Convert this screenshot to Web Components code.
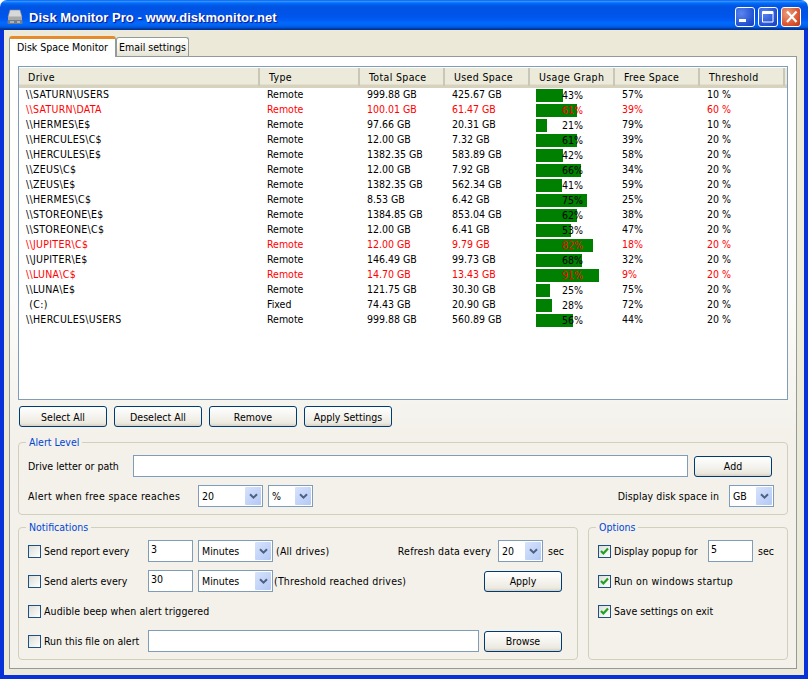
<!DOCTYPE html>
<html>
<head>
<meta charset="utf-8">
<title>Disk Monitor Pro</title>
<style>
    html, body { margin: 0; padding: 0; background: #fff; overflow: hidden; }
    body { font: 10.5px "DejaVu Sans Condensed", "Liberation Sans", sans-serif; color: #000; }
</style>
</head>
<body>
<disk-window></disk-window>

<script>
// Small XP style controls first, then the panels that use them
class XpButton extends HTMLElement {
    constructor() {
        super();
        this.attachShadow({ mode: 'open' }).innerHTML = `
            <style>
                :host {
                    display: flex;
                    align-items: center;
                    justify-content: center;
                    box-sizing: border-box;
                    width: 88px;
                    height: 21px;
                    border: 1px solid #003c74;
                    border-radius: 3px;
                    background: linear-gradient(#fff, #f4f3ee 50%, #ece9df 85%, #d6d0c5);
                }
            </style>
            <slot></slot>
        `;
    }
}

class XpInput extends HTMLElement {
    constructor() {
        super();
        this.attachShadow({ mode: 'open' }).innerHTML = `
            <style>
                :host {
                    display: block;
                    box-sizing: border-box;
                    height: 22px;
                    border: 1px solid #7f9db9;
                    background: #fff;
                    padding: 2px 0 0 2px;
                    line-height: 13px;
                }
            </style>
            <slot></slot>
        `;
    }
}

class XpSelect extends HTMLElement {
    constructor() {
        super();
        this.attachShadow({ mode: 'open' }).innerHTML = `
            <style>
                :host {
                    display: flex;
                    box-sizing: border-box;
                    width: 45px;
                    height: 22px;
                    border: 1px solid #7f9db9;
                    background: #fff;
                    padding: 1px;
                }
                .value { flex: 1; padding-left: 2px; line-height: 18px; }
                .arrow {
                    width: 16px;
                    border-radius: 1px;
                    background: linear-gradient(135deg, #d7e3fc, #b3c8f5);
                    display: flex;
                    align-items: center;
                    justify-content: center;
                }
            </style>
            <span class="value"><slot></slot></span>
            <span class="arrow">
                <svg width="9" height="7" viewBox="0 0 9 7"><path d="M1 1.2 4.5 4.7 8 1.2" fill="none" stroke="#4d6185" stroke-width="2"/></svg>
            </span>
        `;
    }
}

class XpCheck extends HTMLElement {
    constructor() {
        super();
        this.attachShadow({ mode: 'open' }).innerHTML = `
            <style>
                :host {
                    display: inline-flex;
                    align-items: center;
                    gap: 3px;
                    white-space: nowrap;
                }
                .box {
                    box-sizing: border-box;
                    width: 13px;
                    height: 13px;
                    border: 1px solid #1c5180;
                    background: linear-gradient(135deg, #dcdcd7, #fff);
                    display: flex;
                }
                svg { display: none; }
                :host([checked]) svg { display: block; }
            </style>
            <span class="box"><svg width="11" height="11" viewBox="0 0 11 11"><path d="M2 5 4.4 7.5 9 2.5" fill="none" stroke="#21a121" stroke-width="2.2"/></svg></span>
            <slot></slot>
        `;
    }
}

class XpGroup extends HTMLElement {
    constructor() {
        super();
        this.attachShadow({ mode: 'open' }).innerHTML = `
            <style>
                :host { display: block; box-sizing: border-box; height: 100%; }
                fieldset {
                    box-sizing: border-box;
                    height: 100%;
                    margin: 0;
                    padding: 0;
                    border: 1px solid #d0d0bf;
                    border-radius: 4px;
                }
                legend {
                    margin-left: 7px;
                    padding: 0 3px;
                    color: #0046d5;
                    line-height: 13px;
                }
            </style>
            <fieldset>
                <legend><slot name="label"></slot></legend>
                <slot></slot>
            </fieldset>
        `;
    }
}

class UsageBar extends HTMLElement {
    constructor() {
        super();
        this.attachShadow({ mode: 'open' }).innerHTML = `
            <style>
                :host { display: block; position: relative; height: 15px; white-space: normal; }
                .bar { height: 13px; margin-top: 1px; background: #008000; }
                .pct {
                    position: absolute;
                    left: 26px;
                    top: 0;
                    line-height: 13px;
                }
            </style>
            <div class="bar"></div>
            <span class="pct"><slot></slot></span>
        `;
    }

    connectedCallback() {
        this.shadowRoot.querySelector('.bar').style.width = this.getAttribute('width') + 'px';
    }
}

const DRIVES = [
    ['\\\\SATURN\\USERS', 'Remote', '999.88 GB', '425.67 GB', 43, 27, '57%', '10 %'],
    ['\\\\SATURN\\DATA', 'Remote', '100.01 GB', '61.47 GB', 61, 41, '39%', '60 %', 1],
    ['\\\\HERMES\\E$', 'Remote', '97.66 GB', '20.31 GB', 21, 11, '79%', '10 %'],
    ['\\\\HERCULES\\C$', 'Remote', '12.00 GB', '7.32 GB', 61, 41, '39%', '20 %'],
    ['\\\\HERCULES\\E$', 'Remote', '1382.35 GB', '583.89 GB', 42, 27, '58%', '20 %'],
    ['\\\\ZEUS\\C$', 'Remote', '12.00 GB', '7.92 GB', 66, 45, '34%', '20 %'],
    ['\\\\ZEUS\\E$', 'Remote', '1382.35 GB', '562.34 GB', 41, 26, '59%', '20 %'],
    ['\\\\HERMES\\C$', 'Remote', '8.53 GB', '6.42 GB', 75, 51, '25%', '20 %'],
    ['\\\\STOREONE\\E$', 'Remote', '1384.85 GB', '853.04 GB', 62, 41, '38%', '20 %'],
    ['\\\\STOREONE\\C$', 'Remote', '12.00 GB', '6.41 GB', 53, 35, '47%', '20 %'],
    ['\\\\JUPITER\\C$', 'Remote', '12.00 GB', '9.79 GB', 82, 57, '18%', '20 %', 1],
    ['\\\\JUPITER\\E$', 'Remote', '146.49 GB', '99.73 GB', 68, 46, '32%', '20 %'],
    ['\\\\LUNA\\C$', 'Remote', '14.70 GB', '13.43 GB', 91, 63, '9%', '20 %', 1],
    ['\\\\LUNA\\E$', 'Remote', '121.75 GB', '30.30 GB', 25, 14, '75%', '20 %'],
    [' (C:)', 'Fixed', '74.43 GB', '20.90 GB', 28, 16, '72%', '20 %'],
    ['\\\\HERCULES\\USERS', 'Remote', '999.88 GB', '560.89 GB', 56, 37, '44%', '20 %']
];

class DriveList extends HTMLElement {
    constructor() {
        super();
        const heads = ['Drive', 'Type', 'Total Space', 'Used Space', 'Usage Graph', 'Free Space', 'Threshold'];
        const rows = DRIVES.map(d => `
            <div class="row${d[8] ? ' alert' : ''}">
                <span class="cell name">${d[0]}</span>
                <span class="cell">${d[1]}</span>
                <span class="cell">${d[2]}</span>
                <span class="cell">${d[3]}</span>
                <span class="cell graph"><usage-bar width="${d[5]}">${d[4]}%</usage-bar></span>
                <span class="cell">${d[6]}</span>
                <span class="cell">${d[7]}</span>
            </div>
        `).join('');
        this.attachShadow({ mode: 'open' }).innerHTML = `
            <style>
                :host {
                    display: block;
                    box-sizing: border-box;
                    height: 334px;
                    border: 1px solid #7f9db9;
                    background: #fff;
                    padding-top: 1px;
                    --cols: 241px 100px 85px 85px 85px 85px 85px;
                }
                .head, .row { display: grid; grid-template-columns: var(--cols); }
                .head {
                    height: 20px;
                    box-sizing: border-box;
                    background: #ebeadb;
                    border-bottom: 3px solid #d6d2bd;
                    box-shadow: inset 0 -1px 0 #e2dfcc;
                    line-height: 18px;
                    letter-spacing: .35px;
                }
                .head span {
                    padding-left: 9px;
                    box-shadow: inset -2px 0 0 #cbc7b8, inset -1px 0 0 #fff;
                }
                .row { height: 15px; line-height: 13px; }
                .cell { padding-left: 7px; white-space: pre; }
                .name { letter-spacing: .3px; }
                .graph { padding-left: 6px; }
                .alert { color: #f00; }
            </style>
            <div class="head">${heads.map(h => `<span>${h}</span>`).join('')}</div>
            ${rows}
        `;
    }
}

class AlertPanel extends HTMLElement {
    constructor() {
        super();
        this.attachShadow({ mode: 'open' }).innerHTML = `
            <style>
                :host { display: block; height: 79px; }
                .grid {
                    display: grid;
                    grid-template-columns: 99px 555px 78px;
                    column-gap: 6px;
                    align-items: center;
                    padding: 6px 0 0 9px;
                }
                .line { display: flex; align-items: center; margin-top: 8px; padding-left: 9px; }
                .first { width: 170px; letter-spacing: .3px; white-space: nowrap; }
                .gap { width: 5px; }
                .fill { flex: 1; text-align: right; padding-right: 10px; letter-spacing: .1px; }
            </style>
            <xp-group>
                <span slot="label">Alert Level</span>
                <div class="grid">
                    <span>Drive letter or path</span>
                    <xp-input></xp-input>
                    <xp-button style="width:78px">Add</xp-button>
                </div>
                <div class="line">
                    <span class="first">Alert when free space reaches</span>
                    <xp-select style="width:65px">20</xp-select>
                    <span class="gap"></span>
                    <xp-select>%</xp-select>
                    <span class="fill">Display disk space in</span>
                    <xp-select style="margin-right:13px">GB</xp-select>
                </div>
            </xp-group>
        `;
    }
}

class NotifyPanel extends HTMLElement {
    constructor() {
        super();
        this.attachShadow({ mode: 'open' }).innerHTML = `
            <style>
                :host { display: block; height: 139px; width: 560px; }
                .rows { display: grid; row-gap: 8px; padding: 6px 15px 0 9px; grid-auto-rows: 22px; }
                .row { display: flex; align-items: center; }
                .lead { width: 120px; }
                .gap { width: 5px; }
                .note { margin-left: 3px; letter-spacing: .2px; white-space: nowrap; }
                .right { margin-left: auto; }
                .refresh { letter-spacing: .2px; }
                .sec { margin-left: 5px; width: 14px; white-space: nowrap; }
            </style>
            <xp-group>
                <span slot="label">Notifications</span>
                <div class="rows">
                    <div class="row">
                        <xp-check class="lead">Send report every</xp-check>
                        <xp-input style="width:45px">3</xp-input>
                        <span class="gap"></span>
                        <xp-select style="width:75px">Minutes</xp-select>
                        <span class="note">(All drives)</span>
                        <span class="right refresh">Refresh data every</span>
                        <xp-select style="margin-left:7px">20</xp-select>
                        <span class="sec">sec</span>
                    </div>
                    <div class="row">
                        <xp-check class="lead">Send alerts every</xp-check>
                        <xp-input style="width:45px">30</xp-input>
                        <span class="gap"></span>
                        <xp-select style="width:75px">Minutes</xp-select>
                        <span class="note" style="margin-left:1px">(Threshold reached drives)</span>
                        <xp-button class="right" style="width:78px">Apply</xp-button>
                    </div>
                    <div class="row"><xp-check style="letter-spacing:.1px">Audible beep when alert triggered</xp-check></div>
                    <div class="row">
                        <xp-check class="lead">Run this file on alert</xp-check>
                        <xp-input style="width:331px"></xp-input>
                        <xp-button class="right" style="width:78px">Browse</xp-button>
                    </div>
                </div>
            </xp-group>
        `;
    }
}

class OptionsPanel extends HTMLElement {
    constructor() {
        super();
        this.attachShadow({ mode: 'open' }).innerHTML = `
            <style>
                :host { display: block; height: 139px; width: 200px; }
                .rows { display: grid; row-gap: 8px; padding: 6px 9px 0 9px; grid-auto-rows: 22px; }
                .row { display: flex; align-items: center; }
            </style>
            <xp-group>
                <span slot="label">Options</span>
                <div class="rows">
                    <div class="row">
                        <xp-check checked style="width:110px">Display popup for</xp-check>
                        <xp-input style="width:45px">5</xp-input>
                        <span style="margin-left:5px">sec</span>
                    </div>
                    <div class="row"><xp-check checked style="letter-spacing:.25px">Run on windows startup</xp-check></div>
                    <div class="row"><xp-check checked>Save settings on exit</xp-check></div>
                </div>
            </xp-group>
        `;
    }
}

class MonitorTabs extends HTMLElement {
    constructor() {
        super();
        this.attachShadow({ mode: 'open' }).innerHTML = `
            <style>
                :host { display: block; }
                .strip { display: flex; height: 21px; align-items: flex-end; position: relative; z-index: 1; }
                .tab {
                    box-sizing: border-box;
                    display: flex;
                    align-items: center;
                    justify-content: center;
                    border: 1px solid #919b9c;
                    border-bottom: 0;
                    border-radius: 3px 3px 0 0;
                    white-space: nowrap;
                }
                .on {
                    width: 107px;
                    height: 21px;
                    background: #fff;
                    border-top: 3px solid #e68b2c;
                    margin-bottom: -1px;
                    padding-bottom: 2px;
                }
                .off {
                    width: 73px;
                    height: 19px;
                    background: linear-gradient(#fff, #f3f2ea 60%, #e5e3d4);
                }
                .page {
                    box-sizing: border-box;
                    width: 788px;
                    height: 613px;
                    border: 1px solid #919b9c;
                    background: linear-gradient(#fff, #fcfcfa 40%, #f3f1ea 62%, #f3f1ea);
                    padding: 9px 8px 0 8px;
                }
                .buttons { display: flex; gap: 7px; margin: 6px 0 0 1px; }
                .bottom { display: flex; gap: 10px; margin-top: 6px; }
                alert-panel { margin-top: 9px; }
            </style>
            <div class="strip">
                <div class="tab on">Disk Space Monitor</div>
                <div class="tab off">Email settings</div>
            </div>
            <div class="page">
                <drive-list></drive-list>
                <div class="buttons">
                    <xp-button>Select All</xp-button>
                    <xp-button>Deselect All</xp-button>
                    <xp-button>Remove</xp-button>
                    <xp-button>Apply Settings</xp-button>
                </div>
                <alert-panel></alert-panel>
                <div class="bottom">
                    <notify-panel></notify-panel>
                    <options-panel></options-panel>
                </div>
            </div>
        `;
    }
}

class TitleBar extends HTMLElement {
    constructor() {
        super();
        this.attachShadow({ mode: 'open' }).innerHTML = `
            <style>
                :host {
                    display: flex;
                    align-items: center;
                    height: 30px;
                    box-sizing: border-box;
                    padding: 4px 7px 0 7px;
                    border-radius: 7px 7px 0 0;
                    background: linear-gradient(#0058ee 0%, #3593ff 4%, #288eff 6%, #127dff 8%, #036ffc 10%, #0262ee 14%, #0057e5 20%, #0054e3 24%, #0055eb 56%, #005bf5 66%, #026afe 76%, #0062ef 86%, #0052d6 92%, #0040ab 94%, #003092 100%);
                    color: #fff;
                }
                .name {
                    margin-left: 6px;
                    font: bold 13px "Liberation Sans", sans-serif;
                    letter-spacing: .05px;
                    text-shadow: 1px 1px 1px #0f1089;
                    white-space: nowrap;
                    flex: 1;
                }
                .btns { display: flex; gap: 3px; }
                .btn {
                    box-sizing: border-box;
                    width: 20px;
                    height: 20px;
                    border: 1px solid #fff;
                    border-radius: 3px;
                    background: radial-gradient(circle at 30% 30%, #5b85ee, #2350d0 70%, #1c3fb5);
                    display: flex;
                }
                .close { background: radial-gradient(circle at 30% 30%, #eb9a7d, #d9532d 65%, #b8391a); }
            </style>
            <svg width="16" height="16" viewBox="0 0 16 16">
                <path d="M3 1h10l2 7H1z" fill="#d8d8d8" stroke="#8a8a8a" stroke-width=".6"/>
                <rect x="1" y="8" width="14" height="3" fill="#a9a9a9"/>
                <rect x="0.5" y="11" width="15" height="4" rx="1" fill="#6f7f8f"/>
                <rect x="3" y="12.5" width="4" height="1" fill="#dfe6ea"/>
                <rect x="10" y="12.5" width="3" height="1" fill="#dfe6ea"/>
            </svg>
            <span class="name">Disk Monitor Pro - www.diskmonitor.net</span>
            <div class="btns">
                <div class="btn"><svg width="18" height="18" viewBox="0 0 18 18"><rect x="3" y="11" width="7" height="3" fill="#fff"/></svg></div>
                <div class="btn"><svg width="18" height="18" viewBox="0 0 18 18"><path d="M3.5 3.5h10.500v10.500H3.500z" fill="none" stroke="#fff"/><rect x="3.500" y="3.500" width="10.500" height="2.500" fill="#fff"/></svg></div>
                <div class="btn close"><svg width="18" height="18" viewBox="0 0 18 18"><path d="M5 3.500 14.500 14M14.500 3.500 5 14" stroke="#fff" stroke-width="2.200"/></svg></div>
            </div>
        `;
    }
}

class DiskWindow extends HTMLElement {
    constructor() {
        super();
        this.attachShadow({ mode: 'open' }).innerHTML = `
            <style>
                :host {
                    display: block;
                    width: 808px;
                    height: 679px;
                    box-sizing: border-box;
                }
                .client {
                    box-sizing: border-box;
                    height: 649px;
                    border: solid #0831d9;
                    border-width: 0 4px 4px 4px;
                    background: #ece9d8;
                    padding: 5px 0 0 5px;
                }
            </style>
            <title-bar></title-bar>
            <div class="client"><monitor-tabs></monitor-tabs></div>
        `;
    }
}

customElements.define('xp-button', XpButton);
customElements.define('xp-input', XpInput);
customElements.define('xp-select', XpSelect);
customElements.define('xp-check', XpCheck);
customElements.define('xp-group', XpGroup);
customElements.define('usage-bar', UsageBar);
customElements.define('drive-list', DriveList);
customElements.define('alert-panel', AlertPanel);
customElements.define('notify-panel', NotifyPanel);
customElements.define('options-panel', OptionsPanel);
customElements.define('monitor-tabs', MonitorTabs);
customElements.define('title-bar', TitleBar);
customElements.define('disk-window', DiskWindow);
</script>
</body>
</html>
